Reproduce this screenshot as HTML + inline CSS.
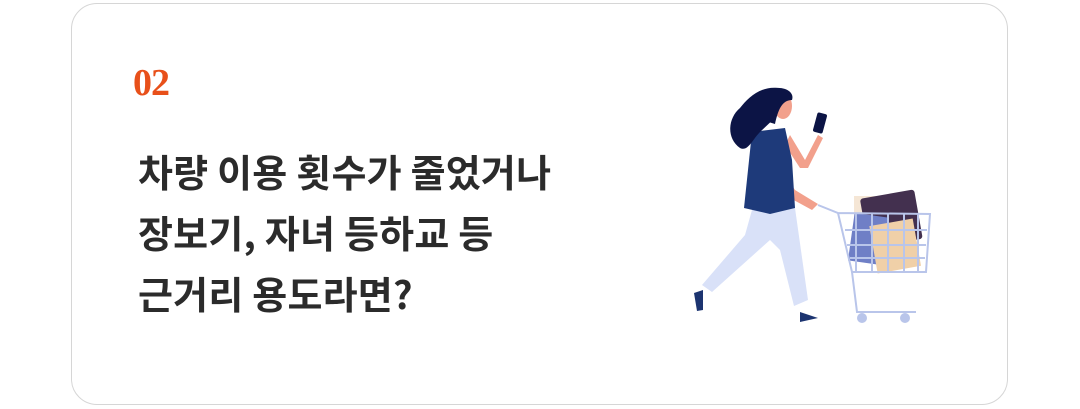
<!DOCTYPE html>
<html><head><meta charset="utf-8"><style>
body{margin:0;width:1080px;height:409px;background:#fff;overflow:hidden;position:relative;font-family:"Liberation Sans","Noto Sans CJK KR",sans-serif}
.card{position:absolute;left:71px;top:3px;width:937px;height:402px;border:1.5px solid #d6d6d6;border-radius:26px;box-sizing:border-box}
.num{position:absolute;left:133px;top:61px;font-family:"Liberation Serif",serif;font-weight:bold;font-size:38px;color:#e8501a;letter-spacing:-1px}
.t{position:absolute;left:138px;top:140px;font-family:"Noto Sans CJK KR",sans-serif;font-weight:bold;font-size:38px;line-height:61px;color:#2b2b2b;letter-spacing:0.2px}
svg{position:absolute;left:0;top:0}
</style></head><body>
<div class="card"></div>
<div class="num">02</div>
<div class="t">차량 이용 횟수가 줄었거나<br>장보기, 자녀 등하교 등<br>근거리 용도라면?</div>
<svg width="1080" height="409">
<rect x="854" y="196" width="40" height="50" fill="#f5e6d5"/>
<rect x="864" y="194" width="55" height="50" rx="3" fill="#43304f" transform="rotate(-10 890 220)"/>
<rect x="851" y="215" width="34" height="48" fill="#6f7fc6" transform="rotate(8 868 240)"/>
<rect x="873" y="222" width="44" height="48" fill="#f0d0a8" transform="rotate(-10 895 245)"/>
<g stroke="#b9c5ea" stroke-width="2" fill="none">
<path d="M818 205 L838 213 L930 214 L926 272 L852 272 L838 213"/>
<path d="M852 272 L857 312 L916 312"/>
<path d="M845 230 H927 M847 245 H926 M850 258 H925"/>
<path d="M856 214 V272 M872 214 V272 M888 214 V272 M904 214 V272 M918 214 V272"/>
</g>
<circle cx="862" cy="318" r="5" fill="#b9c5ea"/><circle cx="905" cy="318" r="5" fill="#b9c5ea"/>
<path d="M752 210 L795 208 L808 300 L794 306 L780 250 L770 240 L712 292 L702 285 L745 235 Z" fill="#d9e1f8"/>
<path d="M694 293 L703 290 L703 310 L697 311 Z" fill="#1c3470"/>
<path d="M800 312 L818 318 L800 322 Z" fill="#1c3470"/>
<path d="M762 140 L795 190 L818 204 L812 210 L790 198 L755 155 Z" fill="#f2a08c"/>
<path d="M790 135 L805 160 L818 135 L823 138 L808 168 L800 168 L785 145 Z" fill="#f2a08c"/>
<rect x="815" y="113" width="10" height="20" rx="2" fill="#0c1445" transform="rotate(15 820 123)"/>
<path d="M752 132 L785 128 L792 160 L795 208 L770 214 L744 208 L748 170 Z" fill="#1e3a7a"/>
<path d="M778 88 C760 86 748 98 740 108 C728 118 726 138 740 148 C748 152 752 140 760 132 L778 115 Z" fill="#0c1445"/>
<ellipse cx="783" cy="106" rx="9" ry="13" fill="#f2a08c"/>
<path d="M770 89 C784 85 795 92 792 100 C782 100 778 110 775 124 L762 120 Z" fill="#0c1445"/>
</svg>
</body></html>
